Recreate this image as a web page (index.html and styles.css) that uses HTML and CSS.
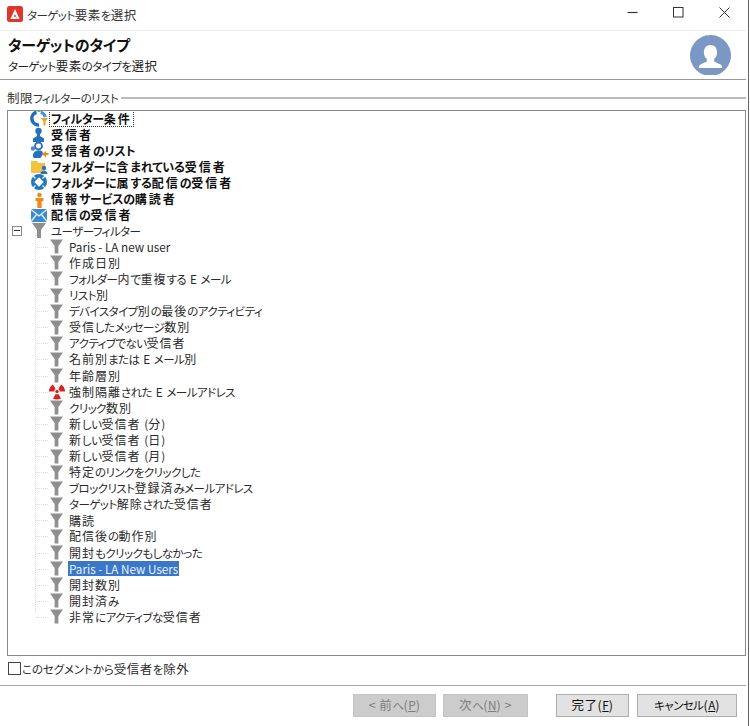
FILE: index.html
```html
<!DOCTYPE html>
<html lang="ja">
<head>
<meta charset="utf-8">
<title>ターゲット要素を選択</title>
<link rel="stylesheet" href="styles.css">
</head>
<body>
<svg class="defs" width="0" height="0">
  <defs>
    <symbol id="funnel" viewBox="0 0 14 15">
      <path d="M0 0H14L9 7V15H5V7Z" fill="#8f8f8f"/>
    </symbol>
  </defs>
</svg>
<div class="window">
  <header class="titlebar">
    <svg class="app-logo" viewBox="0 0 16 16"><rect width="16" height="16" rx="2.5" fill="#e0352b"/><path d="M8 3 12.6 13H10.2L8 8 6.8 10.700H9L9.700 13H3.400Z" fill="#fff"/></svg>
    <span class="title"><span class="k">ターゲット</span>要素<span class="k">を</span>選択</span>
    <div class="winctl">
      <svg viewBox="0 0 11 11"><path d="M0.500 5.500H10.500" stroke="#333" stroke-width="1.200"/></svg>
      <svg viewBox="0 0 11 11"><rect x="0.500" y="0.500" width="9.500" height="9.500" fill="none" stroke="#333" stroke-width="1"/></svg>
      <svg viewBox="0 0 11 11"><path d="M0.500 0.500 10.500 10.500M10.500 0.500 0.500 10.500" stroke="#333" stroke-width="1"/></svg>
    </div>
  </header>
  <section class="banner">
    <div class="banner-text">
      <h1>ターゲットのタイプ</h1>
      <p><span class="k">ターゲット</span>要素<span class="k">のタイプを</span>選択</p>
    </div>
    <svg class="avatar" viewBox="0 0 41 40"><path d="M14.200 40A20.500 20.500 0 1 1 26.800 40Z" fill="#7b98c4"/><path d="M20.500 10c4.200 0 6.600 3.200 6.600 7.200 0 3-1.200 5.200-2.900 6.600v2.400c0 1 3.800 1.600 6.300 3.200 1.300.8 1.800 2 1.800 3.600H8.700c0-1.600.5-2.800 1.800-3.600 2.500-1.600 6.300-2.200 6.300-3.200v-2.400c-1.700-1.400-2.900-3.600-2.900-6.600C13.900 13.200 16.300 10 20.500 10z" fill="#fff"/></svg>
  </section>
  <div class="legend"><span>制限<span class="k">フィルターのリスト</span></span><i></i></div>
  <div class="tree">
    <ul class="roots">
      <li class="row bold"><svg class="ico" viewBox="0 0 20 18"><path d="M6.500 3.200A6.500 6.500 0 0 0 9 15.900" fill="none" stroke="#1f6fb5" stroke-width="3.500"/><path d="M10.800 3.300A6.500 6.500 0 0 1 15.300 8" fill="none" stroke="#3a9ad9" stroke-width="3.200"/><path d="M7.500 0.800H10.500V3H7.500Z" fill="#7ab648"/><path d="M11 9H18L15.500 12.500V16.500H13.500V12.500Z" fill="#f0a31e"/></svg><span class="label focus"><span class="k">フィルター</span>条件</span></li>
      <li class="row bold"><svg class="ico" viewBox="0 0 20 18"><circle cx="8.500" cy="6" r="3.200" fill="#2670bd"/><path d="M7 9H10V11L14 13.500V17H3V13.500L7 11Z" fill="#2670bd"/></svg><span class="label">受信者</span></li>
      <li class="row bold"><svg class="ico" viewBox="0 0 20 18"><circle cx="8.500" cy="5" r="3.500" fill="none" stroke="#2670bd" stroke-width="1.800"/><path d="M3.500 17C2 13 4 10.500 7 9.500H10.500C12.500 10 13 11 13 13L10.500 17Z" fill="#2670bd"/><circle cx="3" cy="7.500" r="2.200" fill="#4b8acb"/><path d="M12 13 16 10V12H18.500V14H16V16.500Z" fill="#ef8a1d"/></svg><span class="label">受信者<span class="k">のリスト</span></span></li>
      <li class="row bold"><svg class="ico" viewBox="0 0 20 18"><path d="M1 4H7L8.500 6H15V16H1Z" fill="#f4c23c"/><circle cx="14" cy="11" r="2.200" fill="#2670bd"/><path d="M10.500 17C10.500 14.500 12 14 14 14S17.500 14.500 17.500 17Z" fill="#2670bd"/></svg><span class="label"><span class="k">フォルダーに</span>含<span class="k">まれている</span>受信者</span></li>
      <li class="row bold"><svg class="ico" viewBox="0 0 20 18"><circle cx="9" cy="9" r="8" fill="#2277c4"/><path d="M9 4.300 13.700 9 9 13.700 4.300 9Z" fill="#fff"/><path d="M3 3 5.500 5.500M15 3 12.500 5.500M3 15 5.500 12.500M15 15 12.500 12.500" stroke="#fff" stroke-width="1.200"/></svg><span class="label"><span class="k">フォルダーに</span>属<span class="k">する</span>配信<span class="k">の</span>受信者</span></li>
      <li class="row bold"><svg class="ico" viewBox="0 0 20 18"><circle cx="9.500" cy="5" r="2.300" fill="#ef8a1d"/><path d="M5.500 8H13.500V11H11.700V18H7.300V11H5.500Z" fill="#ef8a1d"/></svg><span class="label">情報<span class="k">サービスの</span>購読者</span></li>
      <li class="row bold"><svg class="ico" viewBox="0 0 20 18"><rect x="1" y="3" width="16" height="13" fill="#3b8bd4"/><path d="M1 3.500 9 10 17 3.500M1 15.500 6.500 8.500M17 15.500 11.500 8.500" fill="none" stroke="#e4f0fb" stroke-width="1.300"/></svg><span class="label">配信<span class="k">の</span>受信者</span></li>
      <li class="row parent"><span class="expander"><b></b></span><svg class="ico funnel"><use href="#funnel"/></svg><span class="label"><span class="k">ユーザーフィルター</span></span></li>
    </ul>
    <ul class="children">
      <li class="row"><svg class="ico funnel small"><use href="#funnel"/></svg><span class="label lat">Paris - LA new user</span></li>
      <li class="row"><svg class="ico funnel small"><use href="#funnel"/></svg><span class="label">作成日別</span></li>
      <li class="row"><svg class="ico funnel small"><use href="#funnel"/></svg><span class="label"><span class="k">フォルダー</span>内<span class="k">で</span>重複<span class="k">する</span> <span class="lat">E</span> <span class="k">メール</span></span></li>
      <li class="row"><svg class="ico funnel small"><use href="#funnel"/></svg><span class="label"><span class="k">リスト</span>別</span></li>
      <li class="row"><svg class="ico funnel small"><use href="#funnel"/></svg><span class="label"><span class="k">デバイスタイプ</span>別<span class="k">の</span>最後<span class="k">のアクティビティ</span></span></li>
      <li class="row"><svg class="ico funnel small"><use href="#funnel"/></svg><span class="label">受信<span class="k">したメッセージ</span>数別</span></li>
      <li class="row"><svg class="ico funnel small"><use href="#funnel"/></svg><span class="label"><span class="k">アクティブでない</span>受信者</span></li>
      <li class="row"><svg class="ico funnel small"><use href="#funnel"/></svg><span class="label">名前別<span class="k">または</span> <span class="lat">E</span> <span class="k">メール</span>別</span></li>
      <li class="row"><svg class="ico funnel small"><use href="#funnel"/></svg><span class="label">年齢層別</span></li>
      <li class="row"><svg class="ico radio" viewBox="0 0 16 15"><path d="M4 .57A8 8 0 0 0 0 7.500H5.200A2.800 2.800 0 0 1 6.600 5.080ZM12 .57A8 8 0 0 1 16 7.500H10.800A2.800 2.800 0 0 0 9.400 5.080ZM4 14.430A8 8 0 0 0 12 14.430L9.400 9.920A2.800 2.800 0 0 1 6.600 9.920Z" fill="#d9231f"/><circle cx="8" cy="7.500" r="1.700" fill="#d9231f"/></svg><span class="label">強制隔離<span class="k">された</span> <span class="lat">E</span> <span class="k">メールアドレス</span></span></li>
      <li class="row"><svg class="ico funnel small"><use href="#funnel"/></svg><span class="label"><span class="k">クリック</span>数別</span></li>
      <li class="row"><svg class="ico funnel small"><use href="#funnel"/></svg><span class="label">新<span class="k">しい</span>受信者 <span class="lat">(</span>分<span class="lat">)</span></span></li>
      <li class="row"><svg class="ico funnel small"><use href="#funnel"/></svg><span class="label">新<span class="k">しい</span>受信者 <span class="lat">(</span>日<span class="lat">)</span></span></li>
      <li class="row"><svg class="ico funnel small"><use href="#funnel"/></svg><span class="label">新<span class="k">しい</span>受信者 <span class="lat">(</span>月<span class="lat">)</span></span></li>
      <li class="row"><svg class="ico funnel small"><use href="#funnel"/></svg><span class="label">特定<span class="k">のリンクをクリックした</span></span></li>
      <li class="row"><svg class="ico funnel small"><use href="#funnel"/></svg><span class="label"><span class="k">ブロックリスト</span>登録済<span class="k">みメールアドレス</span></span></li>
      <li class="row"><svg class="ico funnel small"><use href="#funnel"/></svg><span class="label"><span class="k">ターゲット</span>解除<span class="k">された</span>受信者</span></li>
      <li class="row"><svg class="ico funnel small"><use href="#funnel"/></svg><span class="label">購読</span></li>
      <li class="row"><svg class="ico funnel small"><use href="#funnel"/></svg><span class="label">配信後<span class="k">の</span>動作別</span></li>
      <li class="row"><svg class="ico funnel small"><use href="#funnel"/></svg><span class="label">開封<span class="k">もクリックもしなかった</span></span></li>
      <li class="row"><svg class="ico funnel small"><use href="#funnel"/></svg><span class="label selected lat">Paris - LA New Users</span></li>
      <li class="row"><svg class="ico funnel small"><use href="#funnel"/></svg><span class="label">開封数別</span></li>
      <li class="row"><svg class="ico funnel small"><use href="#funnel"/></svg><span class="label">開封済<span class="k">み</span></span></li>
      <li class="row"><svg class="ico funnel small"><use href="#funnel"/></svg><span class="label">非常<span class="k">にアクティブな</span>受信者</span></li>
    </ul>
  </div>
  <label class="exclude"><span class="box"></span><span><span class="k">このセグメントから</span>受信者<span class="k">を</span>除外</span></label>
  <footer class="actions">
    <button class="btn disabled wide1">&lt; 前<span class="k">へ</span>(<u class="lat">P</u>)</button>
    <button class="btn disabled wide2">次<span class="k">へ</span>(<u class="lat">N</u>) &gt;</button>
    <button class="btn wide3 gap">完了(<u class="lat">F</u>)</button>
    <button class="btn wide4"><span class="k">キャンセル</span>(<u class="lat">A</u>)</button>
  </footer>
</div>
</body>
</html>
```
FILE: styles.css
```css
* { box-sizing: border-box; }
html, body { margin: 0; padding: 0; }
body {
  width: 750px;
  height: 726px;
  overflow: hidden;
  background: #fff;
  font-family: "Noto Sans CJK JP", "Noto Sans", sans-serif;
  font-size: 12.500px;
  letter-spacing: .5px;
  font-feature-settings: "palt";
  color: #222;
}
.k { font-size: 11.500px; letter-spacing: -.55px; }
.lat { font-size: 11.700px; letter-spacing: 0; }
.defs { position: absolute; }
.window {
  width: 748px;
  height: 726px;
  display: flex;
  flex-direction: column;
  background: #fff;
  border-right: 2px solid #fff;
  box-shadow: 1px 0 0 #666;
}
.titlebar {
  height: 31px;
  flex: none;
  display: flex;
  align-items: center;
  padding: 0 0 2px 7px;
  border-bottom: 1px solid #eee;
}
.app-logo { width: 16px; height: 16px; margin-right: 4px; }
.title { color: #333; }
.winctl { margin-left: auto; display: flex; margin-right: 16px; gap: 35px; margin-top: -3px; }
.winctl svg { width: 11px; height: 11px; display: block; }
.banner {
  height: 49px;
  flex: none;
  display: flex;
  justify-content: space-between;
  padding: 3px 15px 0 8px;
  border-bottom: 1px solid #999;
}
h1 { margin: 0; font-size: 15px; line-height: 22px; letter-spacing: -.2px; font-weight: 700; color: #111; }
.banner p { margin: 1px 0 0; line-height: 17px; color: #222; }
.avatar { width: 41px; height: 40px; margin-top: 1px; }
.legend {
  display: flex;
  align-items: center;
  gap: 3px;
  height: 19px;
  flex: none;
  margin-top: 8px;
  padding-left: 7px;
  color: #333;
}
.legend i { flex: 1; height: 2px; background: #bbb; }
.tree {
  width: 739px;
  height: 546px;
  flex: none;
  margin: 3px 0 0 7px;
  border: 1px solid #8a8a8a;
  overflow: hidden;
}
ul { list-style: none; margin: 0; padding: 0; }
.roots { margin-top: -1px; }
.row { height: 16.100px; display: flex; align-items: center; position: relative; }
.roots .row { padding-left: 22px; }
.children .row { padding-left: 41px; }
.children { position: relative; }
.children::before {
  content: "";
  position: absolute;
  left: 27px;
  top: -4px;
  height: 378px;
  border-left: 1px dotted #ddd;
}
.children .row::before {
  content: "";
  position: absolute;
  left: 28px;
  width: 12px;
  top: 8px;
  border-top: 1px dotted #ddd;
}
.ico { width: 20px; height: 18px; flex: none; display: block; overflow: visible; }
.funnel { width: 14px; height: 15px; margin: 0 4px 0 2px; }
.funnel.small { width: 13px; height: 15px; margin: 0 5px 0 1px; }
.radio { width: 16px; height: 15px; margin: 0 3px 0 0; }
.label { padding: 0 1px; font-size: 12px; letter-spacing: 1px; line-height: 15px; white-space: nowrap; color: #2a2a2a; }
.label.lat { font-size: 11.700px; letter-spacing: 0; }
.label .lat { letter-spacing: 0; }
.bold .label { font-weight: 700; font-size: 12px; letter-spacing: 2px; color: #111; }
.bold .k { font-size: 12px; letter-spacing: -.3px; }
.focus { outline: 1px dotted #333; outline-offset: 0; padding: 0 1px; }
.selected { background: #3a77c9; color: #e8f0fb; }
.expander {
  position: absolute;
  left: 4px;
  top: 3px;
  width: 10px;
  height: 10px;
  border: 1px solid #888;
  display: flex;
  align-items: center;
  justify-content: center;
}
.expander b { width: 6px; height: 1px; background: #333; }
.exclude {
  display: flex;
  align-items: center;
  height: 20px;
  flex: none;
  margin-top: 2px;
  padding-left: 8px;
  gap: 1px;
  color: #2a2a2a;
}
.exclude .k { letter-spacing: -.1px; }
.box { width: 13px; height: 13px; border: 1px solid #444; background: #fff; display: block; }
.actions {
  flex: 1;
  margin-top: 7px;
  border-top: 1px solid #aaa;
  display: flex;
  align-items: flex-start;
  padding: 8px 0 0 353px;
}
.btn {
  height: 23px;
  font-family: inherit;
  font-feature-settings: inherit;
  font-size: 12.500px;
  letter-spacing: .5px;
  line-height: 1;
  padding: 0;
  background: #e2e2e2;
  border: 1px solid #adadad;
  color: #111;
}
.btn.disabled { background: #cccccc; color: #7d7d7d; border-color: #c4c4c4; }
.wide1 { width: 83px; }
.wide2 { width: 85px; margin-left: 7px; }
.wide3 { width: 73px; }
.wide4 { width: 100px; margin-left: 8px; }
.gap { margin-left: 28px; }
```
